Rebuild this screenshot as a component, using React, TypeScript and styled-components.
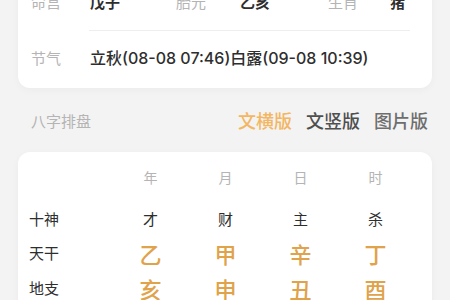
import React from "react";
import styled, { createGlobalStyle } from "styled-components";

const Global = createGlobalStyle`
  html, body { margin: 0; padding: 0; background: #f3f3f3; }
  body { font-family: "Noto Sans CJK SC", "Noto Sans", sans-serif; -webkit-font-smoothing: antialiased; }
`;

const Page = styled.div`
  width: 450px;
  height: 300px;
  overflow: hidden;
  background: #f3f3f3;
`;

const Scroll = styled.div`
  margin-top: -28px;
  padding: 0 18px;
`;

const Card = styled.div`
  background: #fff;
  border-radius: 12px;
  box-shadow: 0 2px 8px rgba(0, 0, 0, 0.035);
`;

const InfoCard = styled(Card)`
  padding: 0 22px 5px 13px;
`;

const InfoRow = styled.div<{ $h: number }>`
  display: flex;
  align-items: center;
  height: ${(p) => p.$h}px;
  font-size: 15px;
`;

const Divider = styled.div`
  height: 1px;
  background: #eeeeee;
  margin-left: 58px;
`;

const Label = styled.span<{ $w: number }>`
  width: ${(p) => p.$w}px;
  flex: none;
  color: #b4b4b4;
`;

const Value = styled.span<{ $w?: number; $bold?: boolean }>`
  width: ${(p) => (p.$w ? `${p.$w}px` : "auto")};
  flex: none;
  color: #2e2e2e;
  font-weight: ${(p) => (p.$bold ? 600 : 400)};
  white-space: nowrap;
`;

const TermValue = styled(Value)`
  font-family: Inter, "Noto Sans CJK SC", sans-serif;
  font-size: 16px;
  font-weight: 500;
`;

const Header = styled.div`
  height: 64px;
  display: flex;
  align-items: center;
  justify-content: space-between;
  padding: 0 4px 0 13px;
`;

const HeaderTitle = styled.span`
  font-size: 15px;
  color: #b4b4b4;
`;

const Tabs = styled.div`
  display: flex;
  gap: 14px;
`;

const Tab = styled.span<{ $color: string; $weight: number }>`
  font-size: 18px;
  color: ${(p) => p.$color};
  font-weight: ${(p) => p.$weight};
`;

const ChartCard = styled(Card)`
  padding: 7px 0 0 11px;
  height: 200px;
  border-radius: 12px 12px 0 0;
`;

const Grid = styled.div<{ $h: number; $mb?: number }>`
  display: grid;
  grid-template-columns: 84px repeat(4, 75px);
  align-items: center;
  height: ${(p) => p.$h}px;
  margin-bottom: ${(p) => p.$mb ?? 0}px;
`;

const RowLabel = styled.span`
  font-size: 15px;
  color: #2e2e2e;
`;

const Cell = styled.span<{ $kind: "head" | "plain" | "big" }>`
  text-align: center;
  font-size: ${(p) => (p.$kind === "big" ? 22 : p.$kind === "head" ? 14 : 15)}px;
  color: ${(p) => (p.$kind === "big" ? "#e0a24a" : p.$kind === "head" ? "#b4b4b4" : "#2e2e2e")};
  font-weight: ${(p) => (p.$kind === "big" ? 500 : 400)};
`;

const rows: { label: string; kind: "plain" | "big"; values: string[] }[] = [
  { label: "十神", kind: "plain", values: ["才", "财", "主", "杀"] },
  { label: "天干", kind: "big", values: ["乙", "甲", "辛", "丁"] },
  { label: "地支", kind: "big", values: ["亥", "申", "丑", "酉"] },
];

export default function App() {
  return (
    <Page>
      <Global />
      <Scroll>
        <InfoCard>
          <InfoRow $h={58}>
            <Label $w={59}>命宫</Label>
            <Value $w={86} $bold>戊子</Value>
            <Label $w={64}>胎元</Label>
            <Value $w={88} $bold>乙亥</Value>
            <Label $w={62}>生肖</Label>
            <Value $bold>猪</Value>
          </InfoRow>
          <Divider />
          <InfoRow $h={52}>
            <Label $w={59}>节气</Label>
            <TermValue>立秋(08-08 07:46)白露(09-08 10:39)</TermValue>
          </InfoRow>
        </InfoCard>
        <Header>
          <HeaderTitle>八字排盘</HeaderTitle>
          <Tabs>
            <Tab $color="#f3b662" $weight={500}>文横版</Tab>
            <Tab $color="#4f4f4f" $weight={500}>文竖版</Tab>
            <Tab $color="#6e6e6e" $weight={500}>图片版</Tab>
          </Tabs>
        </Header>
        <ChartCard>
          <Grid $h={36} $mb={6}>
            <span />
            {["年", "月", "日", "时"].map((t) => (
              <Cell key={t} $kind="head">{t}</Cell>
            ))}
          </Grid>
          {rows.map((r) => (
            <Grid key={r.label} $h={r.kind === "big" ? 35 : 34}>
              <RowLabel>{r.label}</RowLabel>
              {r.values.map((v, i) => (
                <Cell key={i} $kind={r.kind}>{v}</Cell>
              ))}
            </Grid>
          ))}
        </ChartCard>
      </Scroll>
    </Page>
  );
}
